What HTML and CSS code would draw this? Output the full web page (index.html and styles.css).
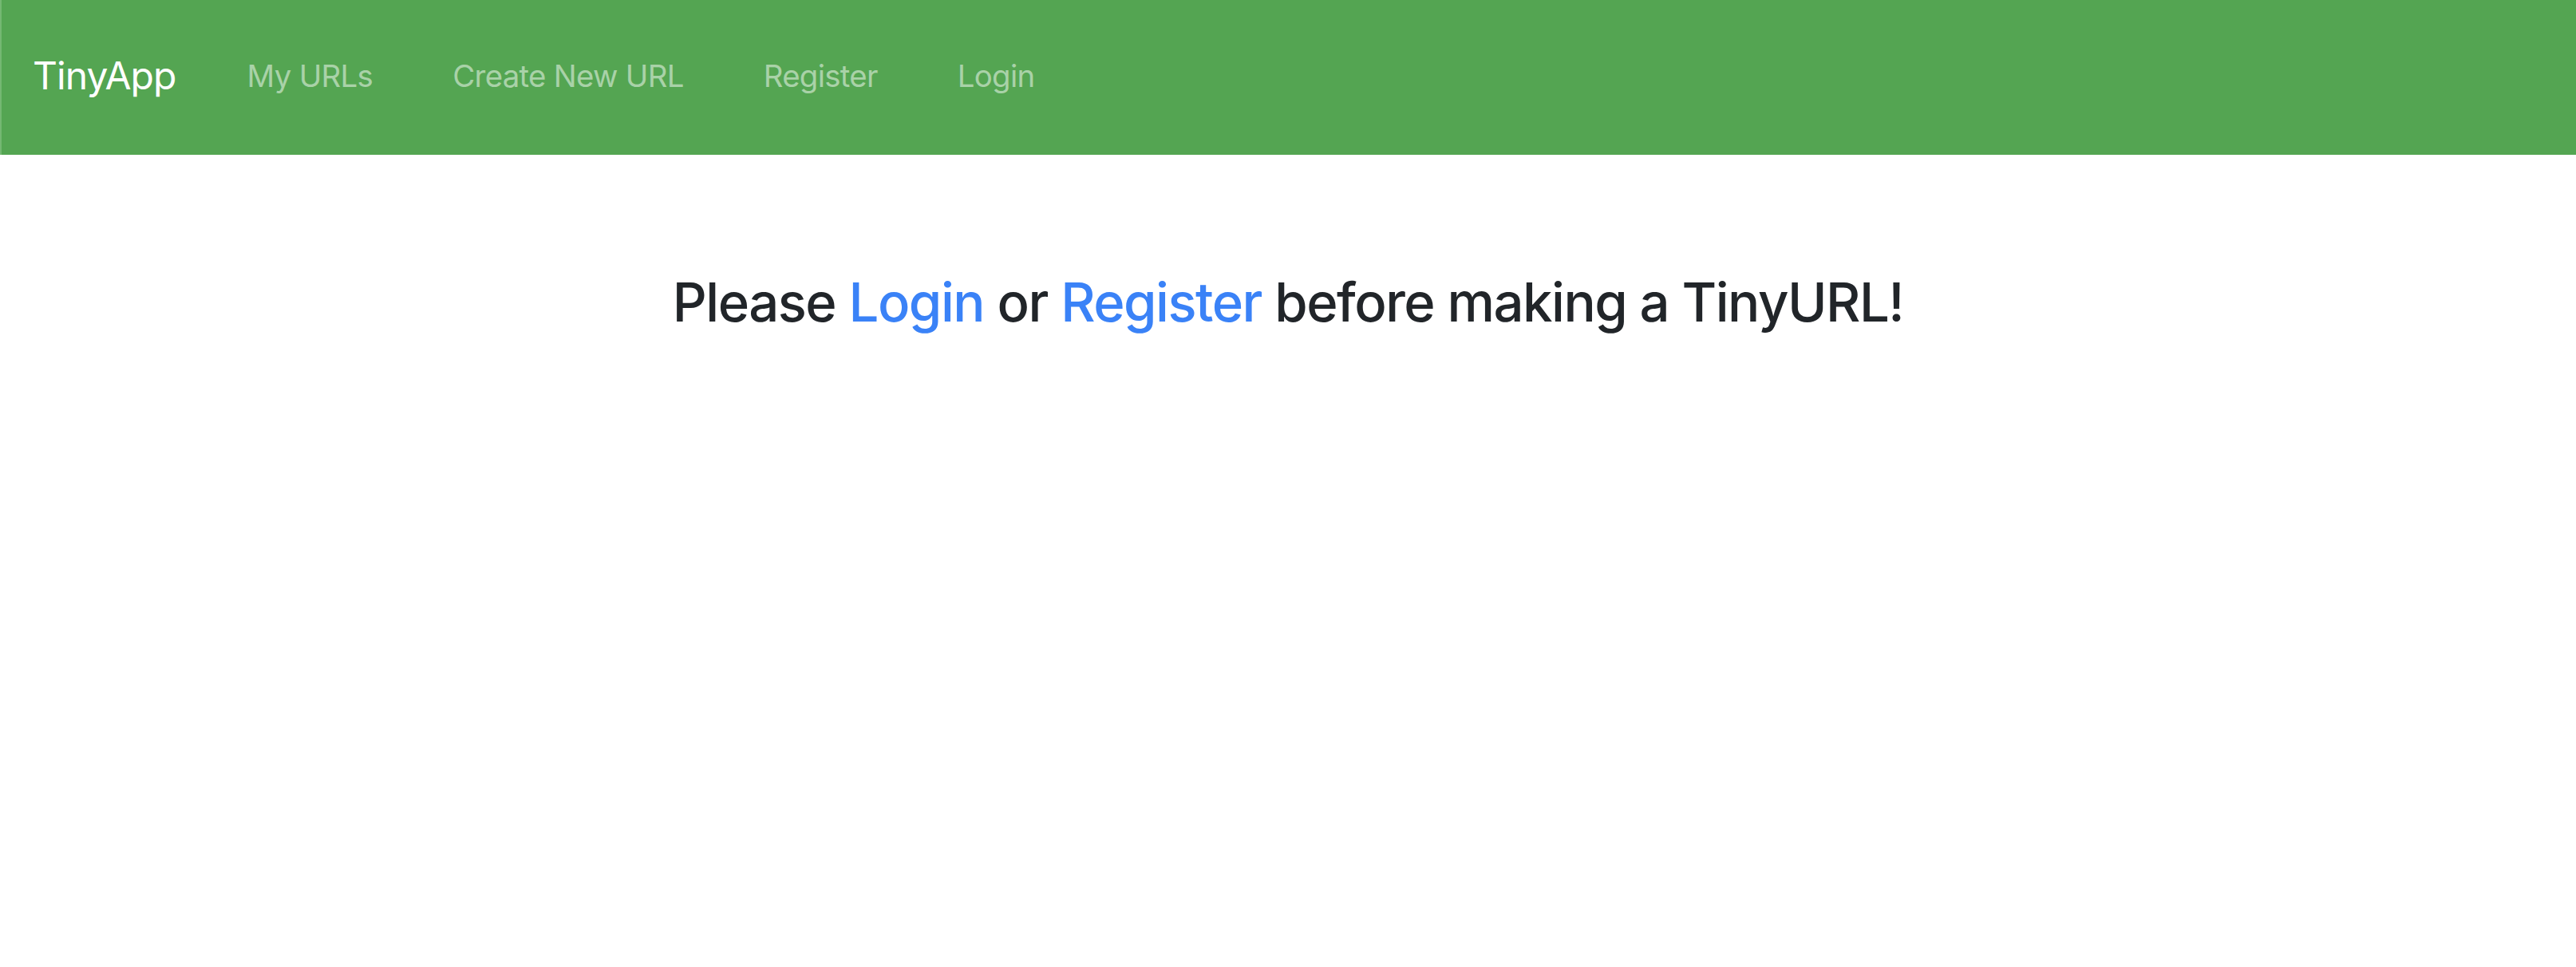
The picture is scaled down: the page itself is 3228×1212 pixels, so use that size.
FILE: index.html
```html
<!DOCTYPE html>
<html lang="en">
<head>
<meta charset="utf-8">
<title>TinyApp</title>
<link rel="stylesheet" href="styles.css">
</head>
<body>
<nav class="navbar">
  <a class="brand" href="#">TinyApp</a>
  <ul class="nav">
    <li><a class="nav-link" href="#">My URLs</a></li>
    <li><a class="nav-link" href="#">Create New URL</a></li>
    <li><a class="nav-link" href="#">Register</a></li>
    <li><a class="nav-link" href="#">Login</a></li>
  </ul>
</nav>
<main class="content">
  <h3 class="notice">Please <a href="#" class="link">Login</a> or <a href="#" class="link">Register</a> before making a TinyURL!</h3>
</main>
</body>
</html>
```
FILE: styles.css
```css
html, body {
  margin: 0;
  padding: 0;
  background: #ffffff;
}
body {
  font-family: Inter, "Liberation Sans", Arial, sans-serif;
  color: #212529;
}
.navbar {
  display: flex;
  align-items: center;
  height: 194px;
  box-sizing: border-box;
  padding-left: 41px;
  padding-bottom: 4px;
  background: #54a552;
  border-left: 2px solid #74b872;
}
.brand {
  color: #ffffff;
  text-decoration: none;
  font-size: 48px;
  letter-spacing: -0.9px;
  line-height: 1;
  margin-right: 89px;
  margin-left: -2px;
}
.nav {
  display: flex;
  align-items: center;
  gap: 100px;
  list-style: none;
  margin: 0;
  padding: 0;
}
.nav-link {
  color: rgba(255, 255, 255, 0.5);
  text-decoration: none;
  font-size: 38.4px;
  letter-spacing: -0.7px;
  line-height: 1;
}
.content {
  padding-top: 145px;
  text-align: center;
}
.notice {
  margin: 0;
  font-size: 67px;
  font-weight: 500;
  letter-spacing: -1.5px;
  line-height: 1.2;
}
.link {
  color: #3a82f7;
  text-decoration: none;
}
```
